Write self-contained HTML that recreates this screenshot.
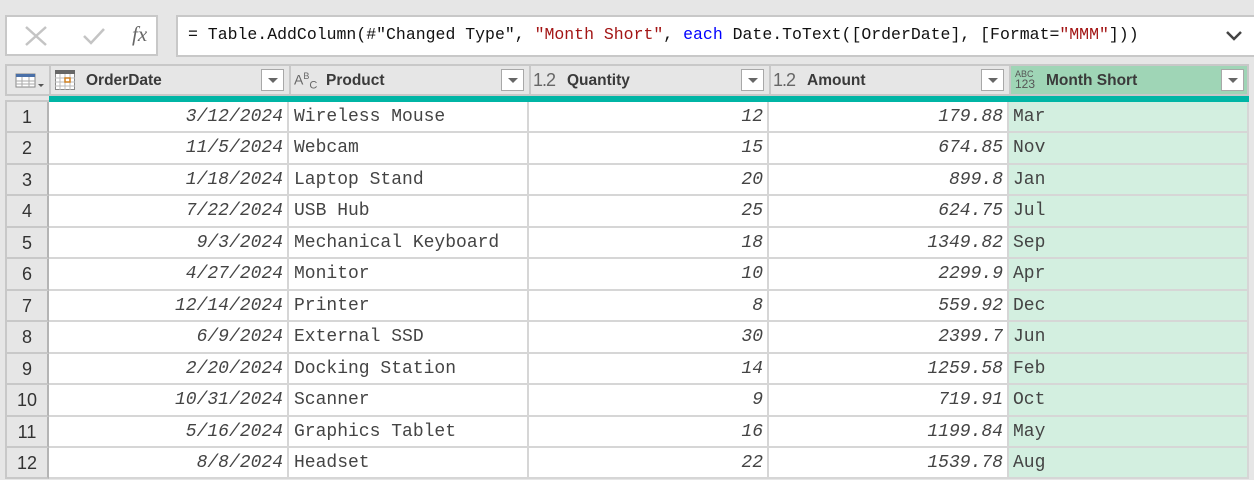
<!DOCTYPE html>
<html><head><style>
*{margin:0;padding:0;box-sizing:border-box}
body{width:1254px;height:480px;background:#e6e6e6;position:relative;overflow:hidden;font-family:"Liberation Sans",sans-serif}
.a{position:absolute}
.hd{position:absolute;top:64px;height:32px;background:#e6e6e6;border:2px solid #c8c8c8;border-right:none}
.hd b{position:absolute;top:6px;font-size:15.5px;color:#3a3a3a}
.dd{position:absolute;top:3px;width:23px;height:22px;background:#fff;border:1px solid #a8a8a8}
.dd:after{content:"";position:absolute;left:6px;top:8px;border-left:5px solid transparent;border-right:5px solid transparent;border-top:5px solid #666}
.row{position:absolute;left:5px;width:1249px}
.c{position:absolute;top:0;height:100%;font-family:"Liberation Mono",monospace;font-size:18px;line-height:30px;color:#444;white-space:pre}
.n{left:0;width:44px;background:#e6e6e6;text-align:center;font-family:"Liberation Sans",sans-serif;font-size:18px;color:#333;border-right:2px solid #b4b4b4;border-bottom:2px solid #c8c8c8;border-left:2px solid #c8c8c8}
.i{font-style:italic;text-align:right}
.cell{background:#fff;border-right:2px solid #d6d6d6;border-bottom:2px solid #d6d6d6}
</style></head><body>
<div class="a" style="left:5px;top:15px;width:153px;height:41px;background:#fff;border:2px solid #c8c8c8"></div>
<svg class="a" style="left:24px;top:25px" width="24" height="22"><path d="M2 2L22 20M22 2L2 20" stroke="#c4c4c4" stroke-width="2.5"/></svg>
<svg class="a" style="left:82px;top:25px" width="24" height="22"><path d="M2 11L9 18L22 4" stroke="#c4c4c4" stroke-width="2.5" fill="none"/></svg>
<div class="a" style="left:132px;top:22px;font-family:'Liberation Serif',serif;font-style:italic;font-size:21px;color:#666">fx</div>
<div class="a" style="left:176px;top:15px;width:1078px;height:42px;background:#fff;border:2px solid #c8c8c8;border-right:none"></div>
<div class="a" style="left:188px;top:25px;font-family:'Liberation Mono',monospace;font-size:16.5px;color:#111;white-space:pre">= Table.AddColumn(#"Changed Type", <span style="color:#a31515">"Month Short"</span>, <span style="color:#0000ff">each</span> Date.ToText([OrderDate], [Format=<span style="color:#a31515">"MMM"</span>]))</div>
<svg class="a" style="left:1225px;top:30px" width="18" height="12"><path d="M2 2L9 9L16 2" stroke="#444" stroke-width="2.5" fill="none"/></svg>

<div class="hd" style="left:5px;width:44px"><svg class="a" style="left:8px;top:6px" width="30" height="18"><rect x="1" y="2" width="19" height="13" fill="#fff" stroke="#888"/><rect x="1" y="2" width="19" height="3" fill="#4a70a8"/><path d="M1 9H20M1 12H20M7 5V15M14 5V15" stroke="#aaa"/><path d="M23 12L29 12L26 15Z" fill="#555"/></svg></div>
<div class="hd" style="left:49px;width:240px"><svg class="a" style="left:4px;top:4px" width="20" height="20"><rect x="0.5" y="0.5" width="19" height="19" fill="#fff" stroke="#888"/><rect x="0" y="0" width="20" height="4" fill="#666"/><path d="M0 8H20M0 12H20M0 16H20M5 4V20M10 4V20M15 4V20" stroke="#bbb"/><rect x="10" y="8" width="5" height="4" fill="none" stroke="#d08020" stroke-width="1.5"/></svg><b style="left:35px">OrderDate</b><div class="dd" style="left:210px"></div></div>
<div class="hd" style="left:289px;width:240px"><span class="a" style="left:3px;top:5px;font-size:14px;color:#666">A<sup style="font-size:9px">B</sup><sub style="font-size:11px">C</sub></span><b style="left:35px">Product</b><div class="dd" style="left:210px"></div></div>
<div class="hd" style="left:529px;width:240px"><span class="a" style="left:2px;top:4px;font-size:18px;color:#666;letter-spacing:-1px">1.2</span><b style="left:36px">Quantity</b><div class="dd" style="left:210px"></div></div>
<div class="hd" style="left:769px;width:240px"><span class="a" style="left:2px;top:4px;font-size:18px;color:#666;letter-spacing:-1px">1.2</span><b style="left:36px">Amount</b><div class="dd" style="left:210px"></div></div>
<div class="hd" style="left:1009px;width:240px;background:#9fd5b6;border-right:2px solid #c8c8c8"><span class="a" style="left:4px;top:3px;font-size:9px;color:#555;line-height:10px">ABC<br><span style="font-size:12px">123</span></span><b style="left:35px">Month Short</b><div class="dd" style="left:210px"></div></div>
<div class="a" style="left:49px;top:96px;width:1200px;height:6px;background:#00b5a5"></div>
<div class="a" style="left:5px;top:96px;width:44px;height:6px;background:#e6e6e6;border-bottom:2px solid #c8c8c8"></div>

<div id="g"></div>
<script>
var d=[["3/12/2024","Wireless Mouse",12,"179.88","Mar"],["11/5/2024","Webcam",15,"674.85","Nov"],["1/18/2024","Laptop Stand",20,"899.8","Jan"],["7/22/2024","USB Hub",25,"624.75","Jul"],["9/3/2024","Mechanical Keyboard",18,"1349.82","Sep"],["4/27/2024","Monitor",10,"2299.9","Apr"],["12/14/2024","Printer",8,"559.92","Dec"],["6/9/2024","External SSD",30,"2399.7","Jun"],["2/20/2024","Docking Station",14,"1259.58","Feb"],["10/31/2024","Scanner",9,"719.91","Oct"],["5/16/2024","Graphics Tablet",16,"1199.84","May"],["8/8/2024","Headset",22,"1539.78","Aug"]];
var h="";
d.forEach(function(r,i){var t=Math.round(102+i*31.45),t2=Math.round(102+(i+1)*31.45);
h+='<div class="row" style="top:'+t+'px;height:'+(t2-t)+'px"><div class="c n">'+(i+1)+'</div>'+
'<div class="c cell i" style="left:44px;width:240px;padding-right:4px">'+r[0]+'</div>'+
'<div class="c cell" style="left:284px;width:240px;padding-left:5px">'+r[1]+'</div>'+
'<div class="c cell i" style="left:524px;width:240px;padding-right:4px">'+r[2]+'</div>'+
'<div class="c cell i" style="left:764px;width:240px;padding-right:4px">'+r[3]+'</div>'+
'<div class="c cell" style="left:1004px;width:240px;padding-left:4px;background:#d3efe0">'+r[4]+'</div></div>';});
document.getElementById("g").innerHTML=h;
</script>
</body></html>
